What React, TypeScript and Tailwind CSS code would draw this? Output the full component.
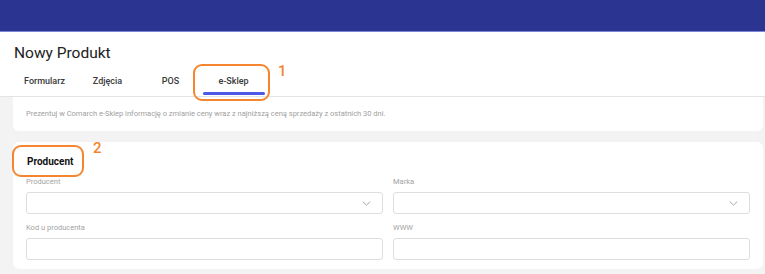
import React from "react";

const tabs = ["Formularz", "Zdjęcia", "POS", "e-Sklep"];

function Chevron() {
  return (
    <svg width="9" height="5" viewBox="0 0 9 5" fill="none" className="shrink-0">
      <path d="M1 0.8l3.5 3.4 3.5-3.4" stroke="#a8a8a8" strokeWidth="1" strokeLinecap="round" strokeLinejoin="round" />
    </svg>
  );
}

function Field({ label, select }: { label: string; select?: boolean }) {
  return (
    <div className="flex flex-col">
      <span className="text-[7.5px] leading-[10px] text-[#a3a3a3] h-[10px]">{label}</span>
      <div className="mt-[5px] h-[22px] rounded-[3px] border border-[#dedede] bg-white flex items-center justify-end pr-[11px]">
        {select && <Chevron />}
      </div>
    </div>
  );
}

export default function App() {
  return (
    <div className="relative w-[765px] h-[274px] overflow-hidden bg-[#f3f3f4]" style={{ fontFamily: "Roboto, 'Liberation Sans', sans-serif" }}>
      {/* top bar */}
      <div className="h-[32px] bg-[#2b3491] border-b border-[#7d86d6]" />

      {/* header */}
      <div className="bg-white border-b border-[#e3e3e3]">
        <div className="pl-[14px] pt-[10px] h-[31px] text-[15.5px] leading-[22px] text-[#222]">Nowy Produkt</div>
        <div className="flex pl-[13px]">
          {tabs.map((t) => (
            <div key={t} className="w-[63px] h-[33px] flex flex-col items-center">
              <span className="text-[9px] leading-[14px] font-medium text-[#3a3a3a] mt-[11px]">{t}</span>
              {t === "e-Sklep" && <div className="mt-auto w-[62px] h-[3px] rounded-full bg-[#4b59e6] mb-[1px]" />}
            </div>
          ))}
        </div>
      </div>

      {/* info card */}
      <div className="ml-[13px] mr-[2px] bg-white rounded-b-[6px] h-[34px] flex items-center pl-[13px]">
        <span className="text-[7.5px] text-[#a0a0a0]">
          Prezentuj w Comarch e-Sklep informację o zmianie ceny wraz z najniższą ceną sprzedaży z ostatnich 30 dni.
        </span>
      </div>

      {/* producent card */}
      <div className="ml-[13px] mr-[2px] mt-[11px] bg-white rounded-[6px] h-[127px] px-[13px]">
        <div className="pt-[13px] pl-[1px] text-[10px] leading-[14px] font-bold text-[#111]">Producent</div>
        <div className="grid grid-cols-2 gap-x-[10px] gap-y-[9px] mt-[8px]">
          <Field label="Producent" select />
          <Field label="Marka" select />
          <Field label="Kod u producenta" />
          <Field label="WWW" />
        </div>
      </div>

      {/* annotations */}
      <div className="absolute left-[193px] top-[64px] w-[77px] h-[37px] border-2 border-[#f5852e] rounded-[9px]" />
      <span className="absolute left-[278px] top-[60px] text-[15px] font-medium text-[#f5852e]">1</span>
      <div className="absolute left-[12px] top-[145px] w-[72px] h-[32px] border-2 border-[#f5852e] rounded-[9px]" />
      <span className="absolute left-[93px] top-[137px] text-[15px] font-medium text-[#f5852e]">2</span>
    </div>
  );
}
